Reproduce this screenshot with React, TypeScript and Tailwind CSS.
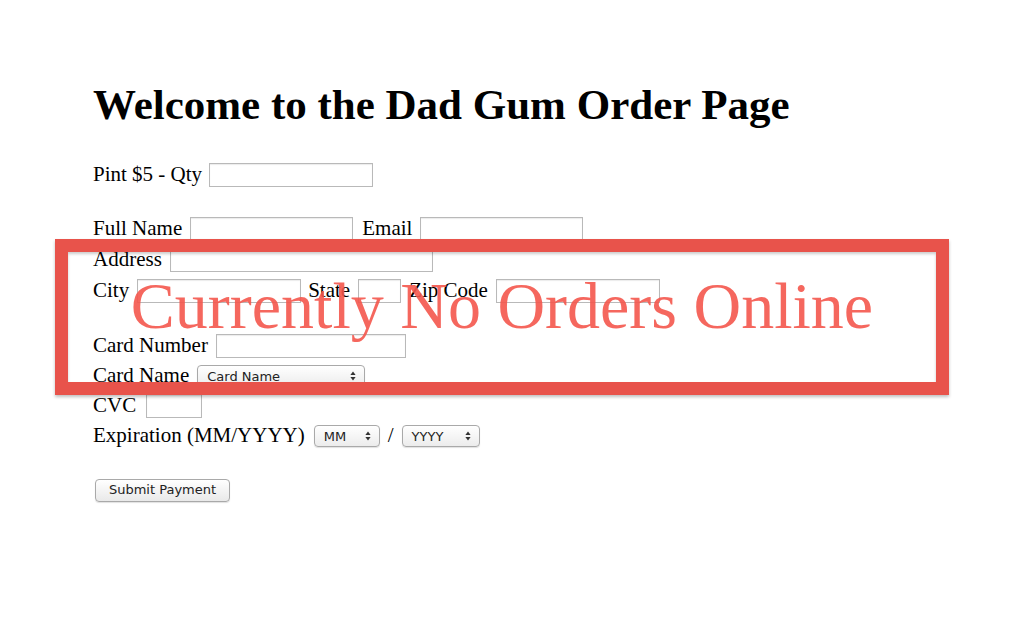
const serif = { fontFamily: '"Liberation Serif", "Times New Roman", serif' };

const Field = ({ w }: { w: number }) => (
  <div
    className="h-[24px] border border-[#b9b9b9] bg-white shadow-[inset_0_1px_1px_rgba(0,0,0,0.08)]"
    style={{ width: w }}
  />
);

const Arrows = () => (
  <svg width="6" height="10" viewBox="0 0 6 10" className="shrink-0">
    <path d="M3 0.5 L5.6 4 H0.4 Z" fill="#333" />
    <path d="M3 9.5 L5.6 6 H0.4 Z" fill="#333" />
  </svg>
);

const Select = ({ label, w }: { label: string; w: number }) => (
  <div
    className="flex h-[22px] items-center justify-between rounded-[4px] border border-[#a9a9a9] bg-gradient-to-b from-white to-[#ececec] pl-[9px] pr-[8px] text-[13px] text-[#222] shadow-[0_1px_1px_rgba(0,0,0,0.12)]"
    style={{ width: w, fontFamily: '"DejaVu Sans", sans-serif' }}
  >
    <span className="leading-none">{label}</span>
    <Arrows />
  </div>
);

export default function App() {
  return (
    <div className="relative h-[631px] w-[1024px] overflow-hidden bg-white text-black" style={serif}>
      <div className="pl-[93px] pt-[80px]">
        <h1 className="h-[50px] text-[43px] font-bold leading-[50px]">Welcome to the Dad Gum Order Page</h1>

        <div className="mt-[30px] flex h-[30px] items-center text-[21px]">
          <span>Pint $5 - Qty</span>
          <div className="ml-[7px]">
            <Field w={164} />
          </div>
        </div>

        <div className="mt-[24px] flex h-[30px] items-center text-[21px]">
          <span>Full Name</span>
          <div className="ml-[8px]">
            <Field w={163} />
          </div>
          <span className="ml-[9px]">Email</span>
          <div className="ml-[8px]">
            <Field w={163} />
          </div>
        </div>

        <div className="mt-[1px] flex h-[30px] items-center text-[21px]">
          <span>Address</span>
          <div className="ml-[8px]">
            <Field w={263} />
          </div>
        </div>

        <div className="mt-[1px] flex h-[30px] items-center text-[21px]">
          <span>City</span>
          <div className="ml-[8px]">
            <Field w={164} />
          </div>
          <span className="ml-[7px]">State</span>
          <div className="ml-[8px]">
            <Field w={43} />
          </div>
          <span className="ml-[8px]">Zip Code</span>
          <div className="ml-[8px]">
            <Field w={164} />
          </div>
        </div>

        <div className="mt-[25px] flex h-[30px] items-center text-[21px]">
          <span>Card Number</span>
          <div className="ml-[8px]">
            <Field w={190} />
          </div>
        </div>

        <div className="flex h-[30px] items-center text-[21px]">
          <span>Card Name</span>
          <div className="ml-[8px]">
            <Select label="Card Name" w={168} />
          </div>
        </div>

        <div className="flex h-[30px] items-center text-[21px]">
          <span>CVC</span>
          <div className="ml-[10px]">
            <Field w={56} />
          </div>
        </div>

        <div className="flex h-[30px] items-center text-[21px]">
          <span>Expiration (MM/YYYY)</span>
          <div className="ml-[9px]">
            <Select label="MM" w={66} />
          </div>
          <span className="ml-[8px]">/</span>
          <div className="ml-[8px]">
            <Select label="YYYY" w={78} />
          </div>
        </div>

        <div className="mt-[24px] flex h-[30px] items-center">
          <div
            className="ml-[2px] flex h-[23px] w-[135px] items-center justify-center rounded-[4px] border border-[#a9a9a9] bg-gradient-to-b from-white to-[#e9e9e9] text-[13px] text-[#222] shadow-[0_1px_1px_rgba(0,0,0,0.12)]"
            style={{ fontFamily: '"DejaVu Sans", sans-serif' }}
          >
            Submit Payment
          </div>
        </div>
      </div>

      {/* closed banner laid over the form */}
      <div className="absolute left-[55px] top-[239px] flex h-[156px] w-[894px] items-center justify-center border-[13px] border-[#e8534b] shadow-[0_2px_3px_rgba(0,0,0,0.25),inset_0_2px_3px_rgba(0,0,0,0.2)]">
        <span className="mb-[22px] whitespace-nowrap text-[66px] leading-none text-[#f4564c]/90" style={serif}>
          Currently No Orders Online
        </span>
      </div>
    </div>
  );
}
